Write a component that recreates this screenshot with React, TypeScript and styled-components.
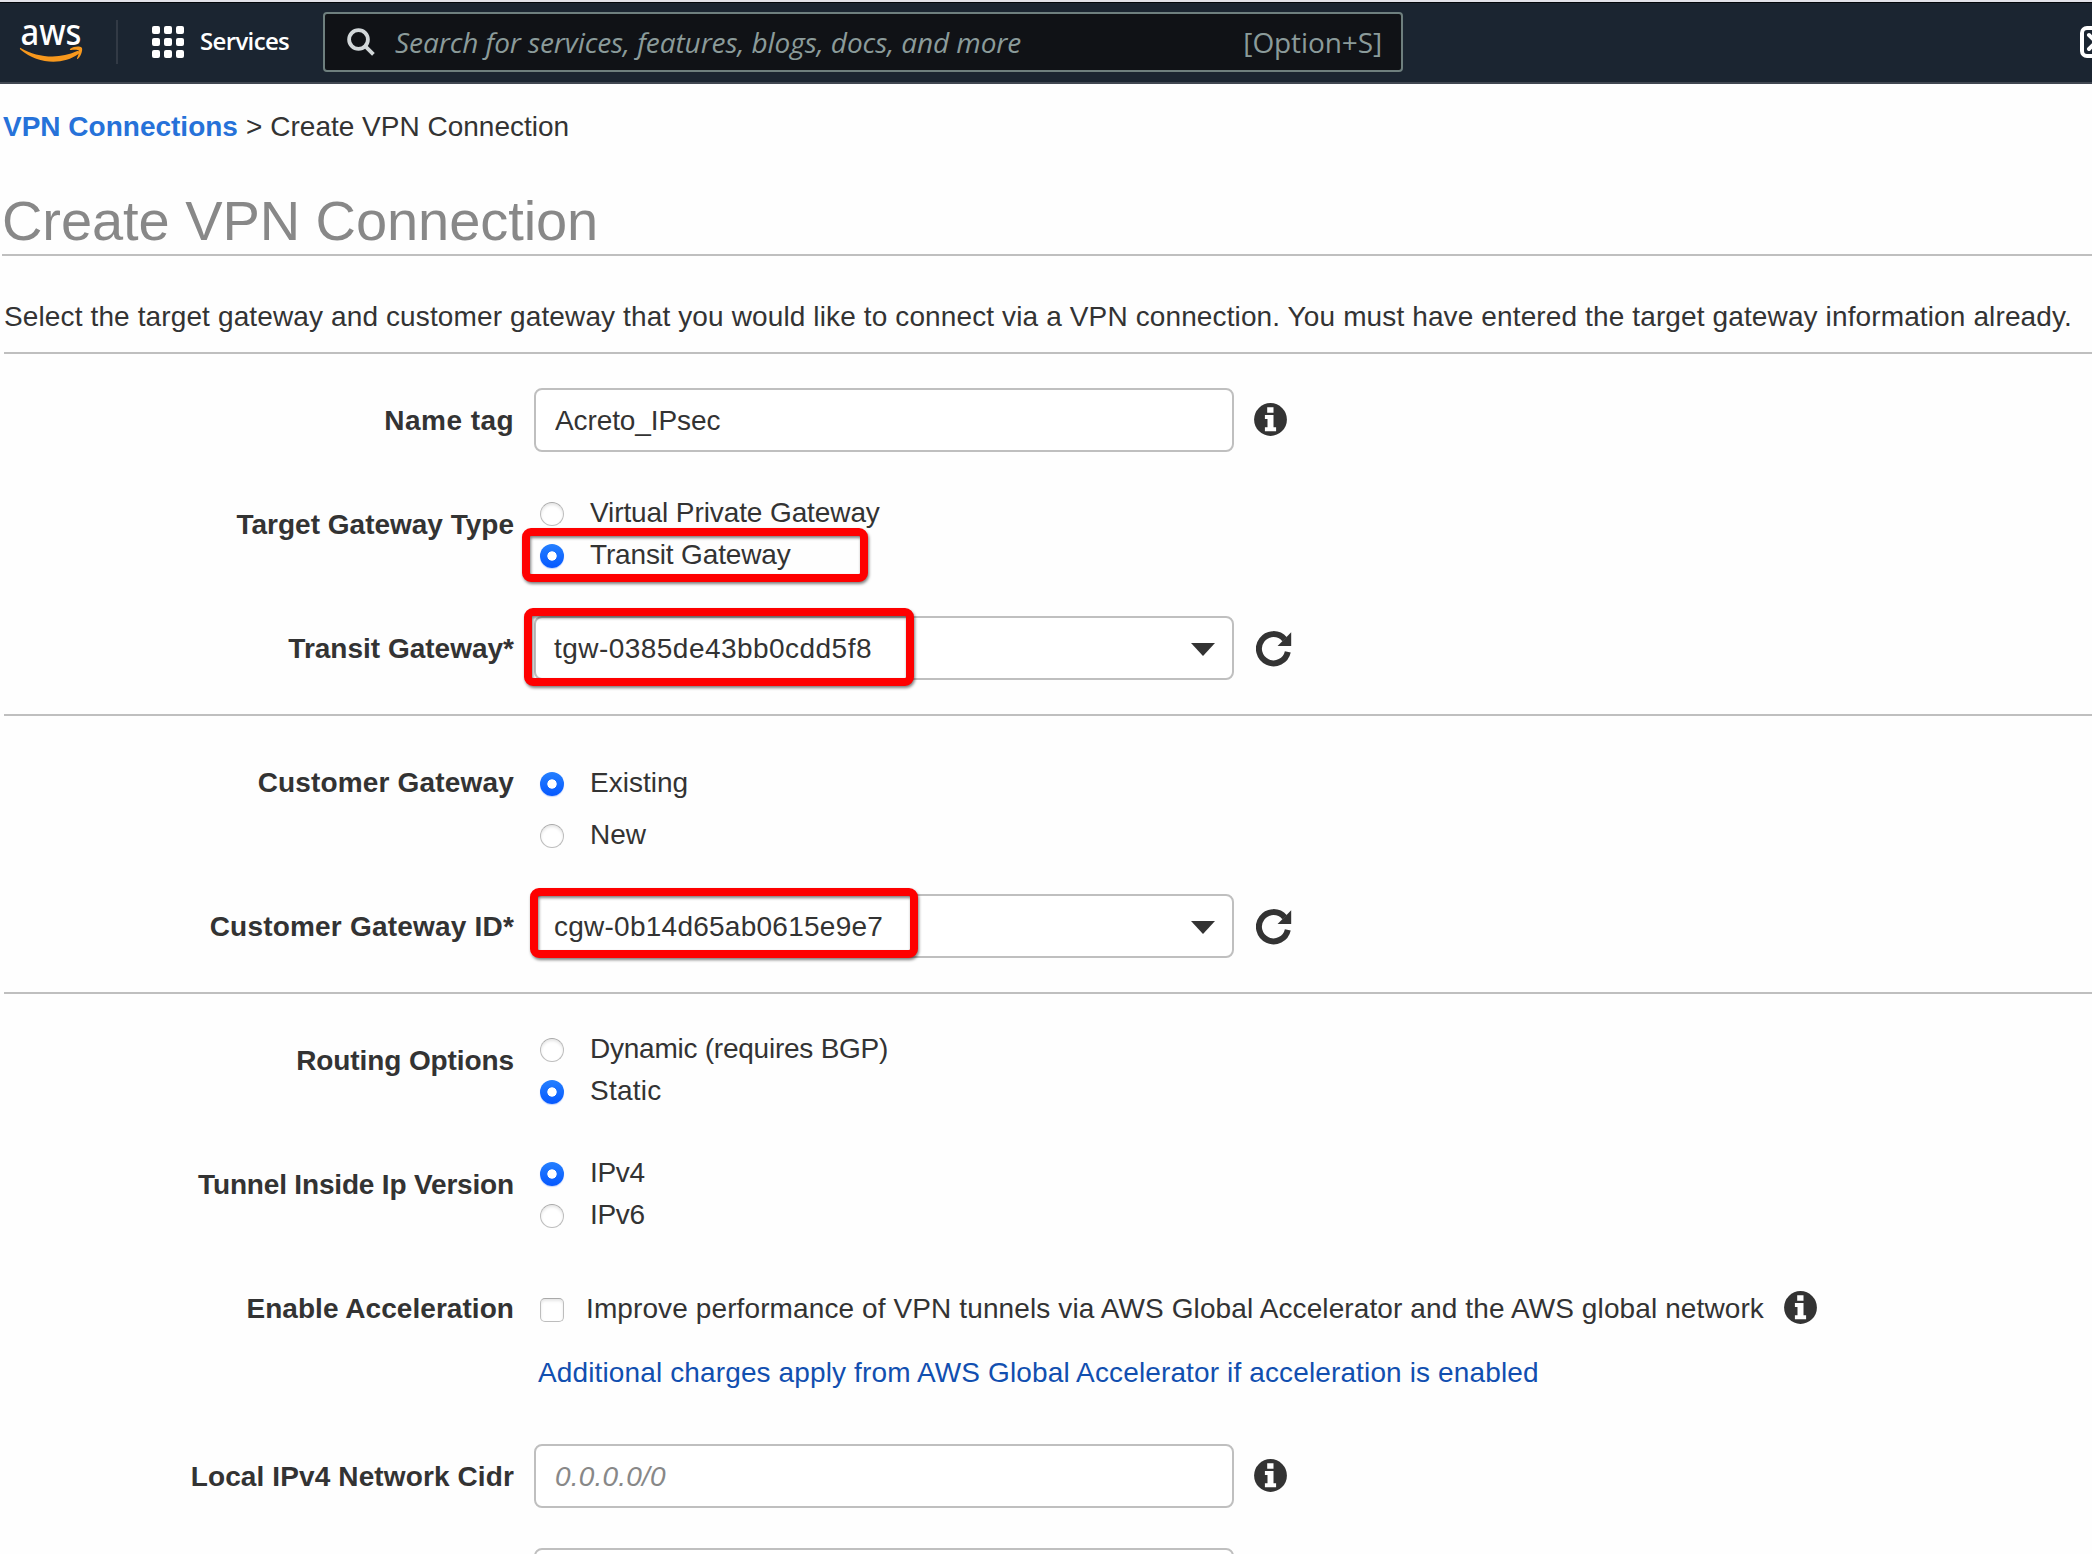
import React, { useState } from "react";
import styled, { createGlobalStyle } from "styled-components";

const GlobalStyle = createGlobalStyle`
  html, body {
    margin: 0;
    padding: 0;
    background: #fefefe;
  }
  *, *::before, *::after {
    box-sizing: border-box;
  }
`;

const SANS = `"Liberation Sans", Arial, Helvetica, sans-serif`;
const NAV_FONT = `"Open Sans", "Noto Sans", sans-serif`;

const Page = styled.div`
  width: 100%;
  height: 1554px;
  overflow: hidden;
  display: flex;
  flex-direction: column;
  font-family: ${SANS};
  font-size: 28px;
  line-height: 34px;
  color: #333;
  white-space: nowrap;
`;

/* ---------- top navigation ---------- */

const WindowEdge = styled.div`
  flex: none;
  height: 2px;
  background: #e3e2e9;
`;

const Nav = styled.header`
  flex: none;
  display: flex;
  align-items: center;
  height: 82px;
  padding: 0 0 1px 20px;
  border-top: 1px solid #04070b;
  border-bottom: 2px solid #414852;
  background: #1b2531;
  font-family: ${NAV_FONT};
  overflow: hidden;
`;

const Logo = styled.svg`
  flex: none;
  width: 64px;
  height: 77px;
  overflow: visible;
  color: #fff;
  font-family: "Noto Sans", sans-serif;
`;

const NavDivider = styled.div`
  flex: none;
  width: 2px;
  height: 44px;
  margin-left: 32px;
  background: #323a45;
`;

const ServicesButton = styled.button`
  flex: none;
  display: flex;
  align-items: center;
  gap: 16px;
  width: 171px;
  margin-left: 34px;
  padding: 0;
  border: 0;
  background: none;
  color: #fff;
  font: 600 24px/32px ${NAV_FONT};
  letter-spacing: -0.65px;
`;

const ServicesText = styled.span`
  padding-bottom: 3px;
`;

const DotGrid = styled.span`
  display: grid;
  grid-template-columns: repeat(3, 8px);
  gap: 4px;
`;

const Dot = styled.span`
  height: 8px;
  border-radius: 2px;
  background: #fff;
`;

const SearchBox = styled.div`
  flex: none;
  display: flex;
  align-items: center;
  width: 1080px;
  height: 60px;
  padding: 0 19px 0 22px;
  border: 2px solid #6e7f7e;
  border-radius: 4px;
  background: #101216;
  color: #8b9b9a;
  font-weight: 500;
  line-height: 40px;
`;

const SearchIcon = styled.svg`
  flex: none;
  width: 28px;
  height: 28px;
  margin-right: 20px;
`;

const SearchHint = styled.span`
  flex: 1;
  font-style: italic;
  letter-spacing: -0.08px;
`;

const Shortcut = styled.span`
  letter-spacing: -0.1px;
`;

const ConsoleIcon = styled.svg`
  flex: none;
  width: 32px;
  height: 32px;
  margin-left: 677px;
`;

/* ---------- page heading ---------- */

const Breadcrumb = styled.nav`
  display: flex;
  gap: 8px;
  padding: 26px 0 0 3px;
`;

const BreadcrumbLink = styled.a`
  color: #2672d9;
  font-weight: bold;
`;

const Title = styled.h1`
  margin: 45px 0 0 2px;
  padding-bottom: 1px;
  border-bottom: 2px solid #bfbfbf;
  color: #888;
  font-size: 56px;
  font-weight: normal;
  line-height: 64px;
  letter-spacing: -0.07px;
`;

const Intro = styled.p`
  margin: 44px 0 0 4px;
  padding-bottom: 18px;
  border-bottom: 2px solid #bfbfbf;
  letter-spacing: 0.125px;
`;

/* ---------- form ---------- */

const Section = styled.section<{ $top: number; $bottom?: number }>`
  margin-left: 4px;
  padding-top: ${(p) => p.$top}px;
  padding-bottom: ${(p) => p.$bottom ?? 34}px;
  border-bottom: 2px solid #bfbfbf;
`;

const Field = styled.div<{ $gap?: number }>`
  display: grid;
  grid-template-columns: 510px 1fr;
  column-gap: 20px;
  align-items: start;
  margin-top: ${(p) => p.$gap ?? 0}px;
`;

const Label = styled.label<{ $offset?: number; $track?: number }>`
  padding-top: ${(p) => p.$offset ?? 0}px;
  font-weight: bold;
  text-align: right;
  letter-spacing: ${(p) => p.$track ?? 0}px;
`;

const Control = styled.div`
  position: relative;
  display: flex;
  align-items: center;
`;

const Stack = styled.div`
  position: relative;
  display: flex;
  flex-direction: column;
  padding-left: 6px;
`;

const boxBorder = `
  border: 2px solid #bfbfbf;
  border-radius: 8px;
  background: #fff;
`;

const TextInput = styled.input<{ $track?: number }>`
  ${boxBorder}
  width: 700px;
  height: 64px;
  padding: 2px 19px 0;
  color: #333;
  font: 28px/32px ${SANS};
  letter-spacing: ${(p) => p.$track ?? 0}px;
  outline: 0;
  &::placeholder {
    color: #888;
    font-style: italic;
    letter-spacing: 0.2px;
    opacity: 1;
  }
`;

const SelectBox = styled.div<{ $track: number }>`
  ${boxBorder}
  display: flex;
  align-items: center;
  justify-content: space-between;
  width: 700px;
  height: 64px;
  padding: 2px 17px 0 18px;
  letter-spacing: ${(p) => p.$track}px;
`;

const Caret = styled.span`
  border: 12px solid transparent;
  border-top: 13px solid #333;
  border-bottom: 0;
`;

const InfoSvg = styled.svg`
  flex: none;
  width: 33px;
  height: 33px;
  margin: 0 0 1px 20px;
`;

const RefreshSvg = styled.svg`
  flex: none;
  width: 36px;
  height: 36px;
  margin: 2px 0 0 22px;
`;

const Option = styled.label<{ $pitch: number; $track?: number }>`
  display: flex;
  align-items: flex-start;
  height: ${(p) => p.$pitch}px;
  letter-spacing: ${(p) => p.$track ?? 0}px;
`;

const Radio = styled.input`
  appearance: none;
  flex: none;
  width: 24px;
  height: 24px;
  margin: 6px 26px 0 0;
  border: 1px solid #bdbdbd;
  border-top-color: #a9a9a9;
  border-radius: 50%;
  background: #fff;
  box-shadow: inset 0 2px 3px rgba(0, 0, 0, 0.1);
  &:checked {
    border: 0;
    background: radial-gradient(circle, #fff 4.3px, transparent 5px),
      linear-gradient(#2580ff, #0558ff);
    box-shadow: 0 1px 1px rgba(0, 80, 255, 0.25);
  }
`;

const Checkbox = styled.input`
  appearance: none;
  flex: none;
  width: 24px;
  height: 24px;
  margin: 6px 22px 0 0;
  border: 1px solid #bdbdbd;
  border-top-color: #a9a9a9;
  border-radius: 5px;
  background: #fff;
  box-shadow: inset 0 2px 3px rgba(0, 0, 0, 0.1);
`;

const CheckRow = styled.div`
  display: flex;
  align-items: center;
  height: 32px;
`;

const ChargesLink = styled.a`
  margin: 32px 0 0 -2px;
  color: #114fb0;
  letter-spacing: 0.13px;
`;

/* Red annotation frame drawn over a control */
const Highlight = styled.div<{ $x: number; $y: number; $w: number; $h: number }>`
  position: absolute;
  left: ${(p) => p.$x}px;
  top: ${(p) => p.$y}px;
  width: ${(p) => p.$w}px;
  height: ${(p) => p.$h}px;
  border: 8px solid #fe0000;
  border-radius: 9px;
  filter: drop-shadow(1px 2px 1.5px rgba(0, 0, 0, 0.5));
  pointer-events: none;
`;

function AwsLogo() {
  return (
    <Logo viewBox="0 -15.5 64 77" aria-label="aws">
      <text x="0.5" y="25" fill="#fff" fontSize="37" fontWeight="500" textLength="61" lengthAdjust="spacingAndGlyphs">
        aws
      </text>
      <path
        d="M0.6 28.4C18 38.6 40 39.6 56.6 31.8c2.2-1 3.8 1.2 1.9 2.7C42.6 46 17.5 44.6 0.6 30.2c-1.2-1.1-.7-2.2 0-1.8z"
        fill="#f7981d"
      />
      <path
        d="M50.2 29.3c3.6-2.5 9.4-2.7 11.4-1.4 1.6 1.3-.2 8.3-3.6 11.4-.6.5-1.2.2-1-.5.8-2 2.7-6.7 1.7-7.9-1-1.2-6.2-.6-8.2-.4-.8.1-.9-.7-.3-1.2z"
        fill="#f7981d"
      />
    </Logo>
  );
}

function InfoIcon() {
  return (
    <InfoSvg viewBox="0 0 33 33">
      <circle cx="16.5" cy="16.5" r="16.4" fill="#333" />
      <path d="M13.2 4.3h6.3v5.4h-6.3zM10.9 12h8.6v12.2h2.6v4H10.9v-4h2.6V16h-2.6z" fill="#fff" />
    </InfoSvg>
  );
}

function RefreshIcon() {
  return (
    <RefreshSvg viewBox="0 0 36 36">
      <path d="M31.8 20.8A14.6 14.6 0 1 1 28.6 8.2" fill="none" stroke="#333" strokeWidth="6" />
      <path d="M35.2 1.3v13.6H21.6z" fill="#333" />
    </RefreshSvg>
  );
}

type Choice = { text: string; track?: number };

function RadioGroup(props: { name: string; choices: Choice[]; initial: number; pitch: number }) {
  const [value, setValue] = useState(props.initial);
  return (
    <>
      {props.choices.map((c, i) => (
        <Option key={c.text} $pitch={props.pitch} $track={c.track}>
          <Radio type="radio" name={props.name} checked={value === i} onChange={() => setValue(i)} />
          {c.text}
        </Option>
      ))}
    </>
  );
}

export default function App() {
  return (
    <Page>
      <GlobalStyle />
      <WindowEdge />
      <Nav>
        <AwsLogo />
        <NavDivider />
        <ServicesButton>
          <DotGrid>
            {Array.from({ length: 9 }, (_, i) => (
              <Dot key={i} />
            ))}
          </DotGrid>
          <ServicesText>Services</ServicesText>
        </ServicesButton>
        <SearchBox>
          <SearchIcon viewBox="0 0 28 28" fill="none" stroke="#d2d7d9" strokeWidth="3.8">
            <circle cx="11.5" cy="11.5" r="9.4" />
            <path d="M18.2 18.2l8.2 8.2" />
          </SearchIcon>
          <SearchHint>Search for services, features, blogs, docs, and more</SearchHint>
          <Shortcut>[Option+S]</Shortcut>
        </SearchBox>
        <ConsoleIcon viewBox="0 0 32 32" fill="none" stroke="#fff" strokeWidth="4">
          <rect x="2" y="2" width="28" height="28" rx="5" />
          <path d="M9 9l7 7-7 7" strokeLinecap="round" />
        </ConsoleIcon>
      </Nav>

      <Breadcrumb>
        <BreadcrumbLink>VPN Connections</BreadcrumbLink>
        <span>&gt;</span>
        <span>Create VPN Connection</span>
      </Breadcrumb>
      <Title>Create VPN Connection</Title>
      <Intro>
        Select the target gateway and customer gateway that you would like to connect via a VPN connection. You must
        have entered the target gateway information already.
      </Intro>

      <Section $top={34}>
        <Field>
          <Label $offset={16} $track={0.45}>Name tag</Label>
          <Control>
            <TextInput defaultValue="Acreto_IPsec" $track={-0.1} />
            <InfoIcon />
          </Control>
        </Field>
        <Field $gap={44}>
          <Label $offset={12}>Target Gateway Type</Label>
          <Stack>
            <RadioGroup
              name="target"
              pitch={42}
              initial={1}
              choices={[
                { text: "Virtual Private Gateway", track: -0.1 },
                { text: "Transit Gateway", track: -0.15 },
              ]}
            />
            <Highlight $x={-12} $y={32} $w={346} $h={54} />
          </Stack>
        </Field>
        <Field $gap={36}>
          <Label $offset={16}>Transit Gateway*</Label>
          <Control>
            <SelectBox $track={0.46}>
              tgw-0385de43bb0cdd5f8
              <Caret />
            </SelectBox>
            <RefreshIcon />
            <Highlight $x={-10} $y={-8} $w={390} $h={78} />
          </Control>
        </Field>
      </Section>

      <Section $top={50}>
        <Field>
          <Label $track={0.17}>Customer Gateway</Label>
          <Stack>
            <RadioGroup
              name="customer"
              pitch={52}
              initial={0}
              choices={[{ text: "Existing" }, { text: "New" }]}
            />
          </Stack>
        </Field>
        <Field $gap={24}>
          <Label $offset={16} $track={0.2}>Customer Gateway ID*</Label>
          <Control>
            <SelectBox $track={0.25}>
              cgw-0b14d65ab0615e9e7
              <Caret />
            </SelectBox>
            <RefreshIcon />
            <Highlight $x={-4} $y={-6} $w={388} $h={70} />
          </Control>
        </Field>
      </Section>

      <Section $top={38}>
        <Field>
          <Label $offset={12} $track={-0.1}>Routing Options</Label>
          <Stack>
            <RadioGroup
              name="routing"
              pitch={42}
              initial={1}
              choices={[{ text: "Dynamic (requires BGP)", track: -0.24 }, { text: "Static", track: 0.25 }]}
            />
          </Stack>
        </Field>
        <Field $gap={40}>
          <Label $offset={12} $track={-0.17}>Tunnel Inside Ip Version</Label>
          <Stack>
            <RadioGroup
              name="ipversion"
              pitch={42}
              initial={0}
              choices={[{ text: "IPv4", track: -0.3 }, { text: "IPv6", track: -0.3 }]}
            />
          </Stack>
        </Field>
        <Field $gap={52}>
          <Label $track={0.05}>Enable Acceleration</Label>
          <Stack>
            <CheckRow>
              <Option $pitch={32} $track={0.11}>
                <Checkbox type="checkbox" />
                Improve performance of VPN tunnels via AWS Global Accelerator and the AWS global network
              </Option>
              <InfoIcon />
            </CheckRow>
            <ChargesLink>Additional charges apply from AWS Global Accelerator if acceleration is enabled</ChargesLink>
          </Stack>
        </Field>
        <Field $gap={54}>
          <Label $offset={16} $track={0.12}>Local IPv4 Network Cidr</Label>
          <Control>
            <TextInput placeholder="0.0.0.0/0" />
            <InfoIcon />
          </Control>
        </Field>
        <Field $gap={40}>
          <Label />
          <Control>
            <TextInput />
          </Control>
        </Field>
      </Section>
    </Page>
  );
}
